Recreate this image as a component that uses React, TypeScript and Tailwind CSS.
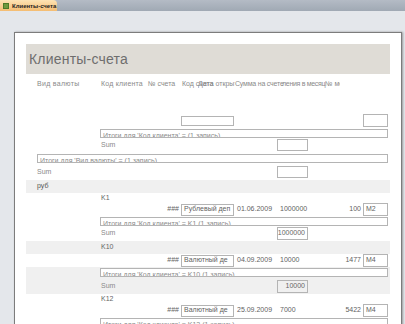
import React from "react";

const Box = ({ w, h, children, right }: { w: string; h: string; children?: React.ReactNode; right?: boolean }) => (
  <div className={`${w} ${h} shrink-0 border border-[#b4b4b4] bg-white flex items-center overflow-hidden whitespace-nowrap px-[2px] ${right ? "justify-end" : ""}`}>
    {children}
  </div>
);

const Totals = ({ w, text }: { w: string; text: string }) => (
  <div className={`${w} h-[9px] shrink-0 border border-[#b4b4b4] bg-white overflow-hidden whitespace-nowrap pl-[2px] leading-[10px] pt-[1px]`}>
    {text}
  </div>
);

const Detail = ({ kind, date, amount, rate, code }: { kind: string; date: string; amount: string; rate: string; code: string }) => (
  <div className="flex h-[13px] items-center pl-[138px] text-[#5f5f5f]">
    <span className="w-[15px] shrink-0 text-right">###</span>
    <div className="ml-[2px]">
      <Box w="w-[53px]" h="h-[12px]">{kind}</Box>
    </div>
    <span className="ml-[3px] w-[43px] shrink-0">{date}</span>
    <span className="w-[40px] shrink-0">{amount}</span>
    <span className="w-[41px] shrink-0 text-right">{rate}</span>
    <div className="ml-[2px]">
      <Box w="w-[25px]" h="h-[13px]">{code}</Box>
    </div>
  </div>
);

export default function App() {
  return (
    <div className="w-[405px] h-[324px] overflow-hidden bg-[#e4e7eb] flex flex-col font-['Liberation_Sans',sans-serif]">
      {/* вкладка */}
      <div className="h-[11px] shrink-0 bg-gradient-to-b from-[#b4bbc5] to-[#a0a9b4] flex">
        <div className="w-[57px] h-full bg-gradient-to-b from-[#fde3b4] to-[#f4bd72] rounded-tr-[4px] flex items-center pl-[3px] gap-[3px]">
          <div className="w-[6px] h-[6px] bg-[#6f9a3e] border border-[#4e7a26]"></div>
          <span className="text-[6px] font-bold text-[#222] leading-none whitespace-nowrap">Клиенты-счета</span>
        </div>
      </div>

      <div className="flex-1 pl-[14px] pt-[21px]">
        <div className="w-[388px] h-full bg-white border border-b-0 border-[#7c7c7c] shadow-[1px_0_2px_rgba(0,0,0,0.35)] pt-[11px] text-[7px] text-[#8a8a8a]">
          <div className="ml-[11px] w-[364px]">
            {/* заголовок */}
            <div className="h-[30px] bg-[#dfdcd6] flex items-center pl-[3px]">
              <span className="text-[14px] text-[#6e6e6e] tracking-[0.2px]">Клиенты-счета</span>
            </div>

            {/* шапка колонок */}
            <div className="mt-[4px] h-[12px] flex items-center whitespace-nowrap">
              <span className="ml-[11px] w-[64px] shrink-0 tracking-[0.3px]">Вид валюты</span>
              <span className="w-[47px] shrink-0 tracking-[0.2px]">Код клиента</span>
              <span className="w-[34px] shrink-0">№ счета</span>
              <span className="w-[16px] shrink-0">Код счета</span>
              <span className="w-[37px] shrink-0 overflow-hidden">Дата открытия</span>
              <span className="w-[47px] shrink-0 tracking-[-0.2px]">Сумма на счете</span>
              <span className="w-[43px] shrink-0 tracking-[-0.3px]">ления в месяц</span>
              <span className="w-[15px] shrink-0 overflow-hidden">№ места</span>
            </div>

            <div className="h-[23px]"></div>

            <div className="flex h-[15px] items-center">
              <div className="ml-[155px]">
                <Box w="w-[53px]" h="h-[10px]" />
              </div>
              <div className="ml-[129px]">
                <Box w="w-[25px]" h="h-[13px]" />
              </div>
            </div>
            <div className="flex h-[10px] items-center">
              <div className="ml-[74px]">
                <Totals w="w-[288px]" text="Итоги для 'Код клиента' =  (1 запись)" />
              </div>
            </div>
            <div className="flex h-[14px] items-center">
              <span className="ml-[75px] w-[176px] shrink-0">Sum</span>
              <Box w="w-[31px]" h="h-[12px]" />
            </div>
            <div className="flex h-[12px] items-center">
              <div className="ml-[11px]">
                <Totals w="w-[351px]" text="Итоги для 'Вид валюты' =  (1 запись)" />
              </div>
            </div>
            <div className="flex h-[16px] items-center">
              <span className="ml-[11px] w-[240px] shrink-0">Sum</span>
              <Box w="w-[31px]" h="h-[12px]" />
            </div>

            {/* руб */}
            <div className="h-[13px] bg-[#f0f0f0] flex items-center text-[#555]">
              <span className="ml-[11px]">руб</span>
            </div>

            {/* K1 */}
            <div className="h-[10px] flex items-center text-[#666]">
              <span className="ml-[75px]">K1</span>
            </div>
            <Detail kind="Рублевый деп" date="01.06.2009" amount="1000000" rate="100" code="M2" />
            <div className="flex h-[10px] items-center">
              <div className="ml-[74px]">
                <Totals w="w-[288px]" text="Итоги для 'Код клиента' = K1 (1 запись)" />
              </div>
            </div>
            <div className="flex h-[15px] items-center">
              <span className="ml-[75px] w-[176px] shrink-0">Sum</span>
              <Box w="w-[31px]" h="h-[13px]" right>
                <span className="text-[#666]">1000000</span>
              </Box>
            </div>

            {/* K10 */}
            <div className="h-[13px] bg-[#f0f0f0] flex items-center text-[#666]">
              <span className="ml-[75px]">K10</span>
            </div>
            <Detail kind="Валютный де" date="04.09.2009" amount="10000" rate="1477" code="M4" />
            <div className="bg-[#f0f0f0]">
              <div className="flex h-[11px] items-center">
                <div className="ml-[74px]">
                  <Totals w="w-[288px]" text="Итоги для 'Код клиента' = K10 (1 запись)" />
                </div>
              </div>
              <div className="flex h-[16px] items-center">
                <span className="ml-[75px] w-[176px] shrink-0">Sum</span>
                <div className="w-[31px] h-[13px] shrink-0 border border-[#b4b4b4] bg-[#f0f0f0] flex items-center justify-end pr-[2px] text-[#666]">10000</div>
              </div>
            </div>

            {/* K12 */}
            <div className="h-[10px] flex items-center text-[#666]">
              <span className="ml-[75px]">K12</span>
            </div>
            <Detail kind="Валютный де" date="25.09.2009" amount="7000" rate="5422" code="M4" />
            <div className="flex h-[10px] items-center">
              <div className="ml-[74px]">
                <Totals w="w-[288px]" text="Итоги для 'Код клиента' = K12 (1 запись)" />
              </div>
            </div>
          </div>
        </div>
      </div>
    </div>
  );
}
